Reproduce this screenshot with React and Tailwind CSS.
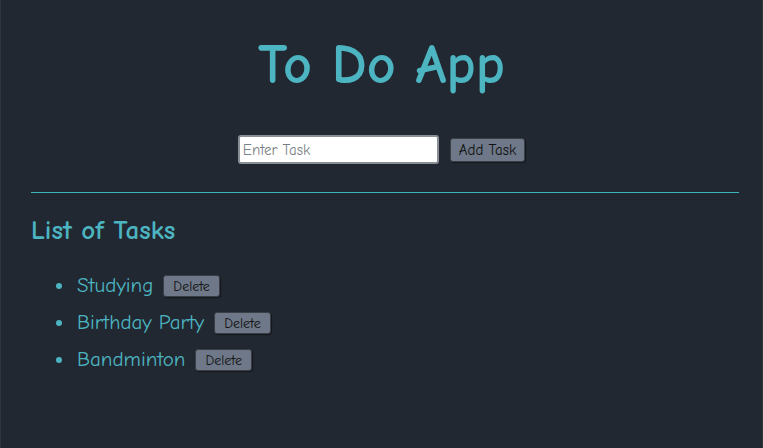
import { useState } from "react";

const FONT = "font-['Comic_Sans_MS','Comic_Neue','Noto_Sans',sans-serif]";

const TaskItem = ({ name, onDelete }) => (
  <li className="flex items-center h-[37px]">
    <span className="w-[6px] h-[6px] rounded-full bg-[#4cb5c1] ml-[55px] mr-[15px]" />
    <span className="text-[21px] text-[#4cb5c1]">{name}</span>
    <button
      onClick={onDelete}
      className="ml-[10px] h-[22px] px-[9px] text-[14px] text-[#111] bg-[#6e7888] rounded-[3px] border border-[#3a3f47] shadow-[1px_1px_1px_#15181d]"
    >
      Delete
    </button>
  </li>
);

const App = () => {
  const [tasks, setTasks] = useState(["Studying", "Birthday Party", "Bandminton"]);
  const [text, setText] = useState("");

  const addTask = () => {
    if (!text.trim()) return;
    setTasks([...tasks, text.trim()]);
    setText("");
  };

  return (
    <div className={`w-[763px] h-[448px] bg-[#222831] border-x border-[#30343b] ${FONT}`}>
      <h1 className="pt-[32px] text-center text-[56px] leading-[66px] font-bold text-[#4cb5c1]">
        To Do App
      </h1>

      <div className="flex justify-center items-center gap-[11px] mt-[37px]">
        <input
          value={text}
          onChange={(e) => setText(e.target.value)}
          placeholder="Enter Task"
          className="w-[201px] h-[29px] px-[3px] text-[15px] bg-white rounded-[3px] border-2 border-[#8a8f96] text-[#333] placeholder:text-[#7a7f86] outline-none"
        />
        <button
          onClick={addTask}
          className="h-[24px] px-[8px] text-[15px] text-[#111] bg-[#6e7888] rounded-[3px] border border-[#3a3f47] shadow-[1px_1px_1px_#15181d]"
        >
          Add Task
        </button>
      </div>

      <div className="ml-[30px] mr-[23px] mt-[28px] h-px bg-[#3fb3bd]" />

      <h2 className="ml-[30px] mt-[21px] text-[27px] leading-[34px] font-bold text-[#4cb5c1]">
        List of Tasks
      </h2>

      <ul className="mt-[19px]">
        {tasks.map((t, i) => (
          <TaskItem key={i} name={t} onDelete={() => setTasks(tasks.filter((_, j) => j !== i))} />
        ))}
      </ul>
    </div>
  );
};

export default App;
